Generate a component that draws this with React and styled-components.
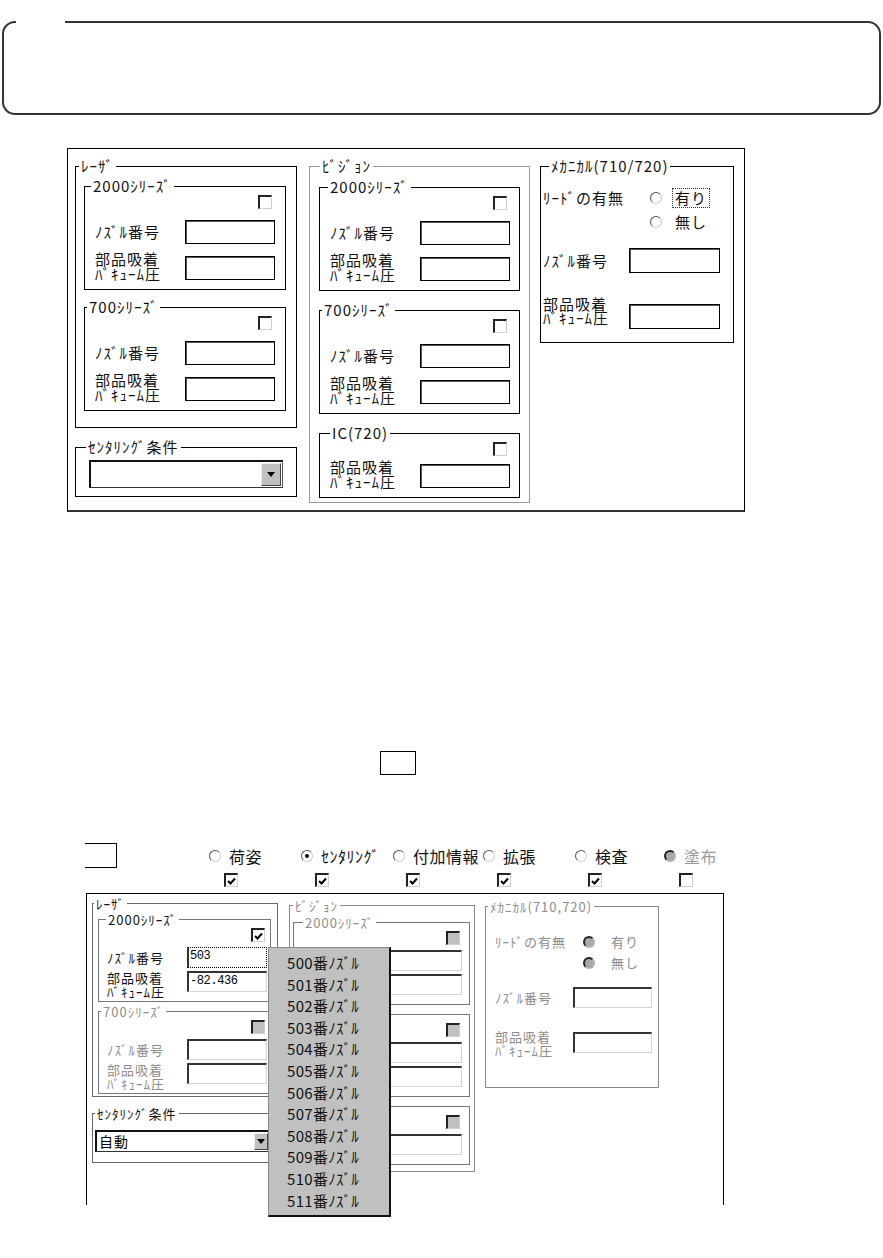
import React from "react";
import styled, { createGlobalStyle, css } from "styled-components";

const GlobalStyle = createGlobalStyle`
  html, body { margin: 0; padding: 0; background: #fff; }
  body { font-family: "Noto Sans CJK JP", "Noto Sans", sans-serif; color: #111; }
`;

// upper dialog sizes / lower dialog sizes
const UP = {
  lh: 14, lh2: 15, labelW: 90, editW: 90, editH: 24, subPad: "2px 0 8px 10px",
  checkPad: 3, row1Mt: 11, row2Mt: 7, shift: 5, icMt: 3, subLine: "#000", sunken: false,
};
const LO = {
  lh: 13, lh2: 14, labelW: 80, editW: 80, editH: 21, subPad: "2px 0 2px 8px",
  checkPad: 2, row1Mt: 5, row2Mt: 3, shift: 0, icMt: 5, subLine: "#777", sunken: true,
};
const MU = {
  w: 194, ml: 10, mt: 0, line: "#000", indent: 11, lh: 14, lh2: 14, pad: "14px 0 13px 2px",
  leadW: 107, optH: 22, optGap: 2, radioGap: 10, row1Mt: 15, row2Mt: 24, shift: 7,
  labelW: 86, editW: 91, editH: 25, sunken: false,
};
const ML = {
  w: 174, ml: 10, mt: 3, line: "#888", indent: 5, lh: 13, lh2: 14, pad: "19px 0 29px 9px",
  leadW: 88, optH: 20, optGap: 1, radioGap: 13, row1Mt: 14, row2Mt: 22, shift: 2,
  labelW: 78, editW: 79, editH: 21, sunken: true,
};

const Page = styled.div`
  width: 883px;
  height: 1258px;
  overflow: hidden;
`;

const Banner = styled.fieldset`
  box-sizing: border-box;
  height: 94px;
  margin: 21px 2px 0;
  padding: 0 0 0 12px;
  min-width: 0;
  border: 2px solid #333;
  border-radius: 13px;
`;
const BannerGap = styled.legend`
  width: 49px;
  height: 2px;
  padding: 0;
  margin: 0;
`;

const Dialog = styled.div`
  box-sizing: border-box;
  width: 678px;
  height: 364px;
  margin: 33px 0 0 67px;
  padding: 10px 0 0 7px;
  border: 1px solid #000;
  border-bottom: 2px solid #333;
  display: flex;
  align-items: flex-start;
  font-size: 15px;
  letter-spacing: 1px;
`;

const Column = styled.div`
  display: flex;
  flex-direction: column;
  width: ${p => p.$w}px;
  margin-left: ${p => p.$ml || 0}px;
  margin-top: ${p => p.$mt || 0}px;
`;

const Group = styled.fieldset`
  box-sizing: border-box;
  margin: ${p => p.$mt || 0}px 0 0 ${p => p.$ml || 0}px;
  padding: 0;
  min-width: 0;
  width: ${p => (p.$w ? `${p.$w}px` : "auto")};
  border: 1px solid ${p => p.$line || "#000"};
  color: ${p => (p.$dim ? "#8c8c8c" : "inherit")};
`;
const Title = styled.legend`
  margin-left: ${p => p.$indent - 3}px;
  padding: 0 2px;
  height: ${p => p.$lh}px;
  line-height: ${p => p.$lh}px;
  white-space: nowrap;
`;
const Body = styled.div`
  display: flex;
  flex-direction: column;
  padding: ${p => p.$pad};
`;

const CheckLine = styled.div`
  display: flex;
  justify-content: flex-end;
  width: ${p => p.$w}px;
  padding-right: ${p => p.$pr}px;
  box-sizing: border-box;
`;
const Box = styled.span`
  box-sizing: border-box;
  display: inline-flex;
  align-items: center;
  justify-content: center;
  width: 14px;
  height: 14px;
  border-style: solid;
  border-width: 2px 1px 1px 2px;
  border-color: #222 #cfcfcf #cfcfcf #222;
  background: ${p => (p.$dim ? "#c0c0c0" : "#fff")};
`;
function Check({ checked, dim }) {
  return (
    <Box $dim={dim}>
      {checked && (
        <svg width="9" height="8" viewBox="0 0 9 8">
          <path d="M1 4 L3.5 6.5 L8 1.5" fill="none" stroke="#000" strokeWidth="2" />
        </svg>
      )}
    </Box>
  );
}

const Radio = styled.span`
  box-sizing: border-box;
  flex: 0 0 12px;
  width: 12px;
  height: 12px;
  border-radius: 50%;
  border-style: solid;
  border-width: ${p => (p.$dim ? 2 : 1)}px;
  border-color: ${p => (p.$dim ? "#222 #b0b0b0 #b0b0b0 #222" : "#555 #cfcfcf #cfcfcf #555")};
  background: ${p => (p.$dim ? "#a9a9a9" : "#fff")};
  display: flex;
  align-items: center;
  justify-content: center;
  &::after {
    content: "";
    display: ${p => (p.$on ? "block" : "none")};
    width: 4px;
    height: 4px;
    border-radius: 50%;
    background: #000;
  }
`;

const Row = styled.div`
  display: flex;
  align-items: ${p => (p.$top ? "flex-start" : "center")};
  margin-top: ${p => p.$mt || 0}px;
`;
const Label = styled.div`
  flex: 0 0 ${p => p.$w}px;
  min-height: ${p => p.$lh * (p.$lines || 1)}px;
  line-height: ${p => p.$lh}px;
  white-space: nowrap;
`;
const Edit = styled.div`
  box-sizing: border-box;
  flex: 0 0 ${p => p.$w}px;
  height: ${p => p.$h}px;
  margin-top: ${p => p.$mt || 0}px;
  padding-left: 1px;
  background: #fff;
  color: #000;
  font: 12px/17px "Liberation Mono", monospace;
  letter-spacing: -0.4px;
  ${p =>
    p.$sunken
      ? css`
          border-style: solid;
          border-width: 2px 1px 1px 2px;
          border-color: #333 #d4d4d4 #d4d4d4 #333;
        `
      : css`
          border: 1px solid #000;
          box-shadow: inset 1px 1px 0 #555;
        `}
  ${p =>
    p.$focus &&
    css`
      border: 1px dotted #000;
      border-left: 2px solid #333;
    `}
`;

const Combo = styled.div`
  box-sizing: border-box;
  display: flex;
  height: ${p => p.$h}px;
  background: #fff;
  border-style: solid;
  border-width: 2px 1px 1px 2px;
  border-color: #111 #555 #333 #111;
  font-size: 14px;
  line-height: ${p => p.$h - 3}px;
  color: #000;
`;
const ComboText = styled.span`
  flex: 1;
  padding-left: 2px;
`;
const ComboBtn = styled.span`
  box-sizing: border-box;
  flex: 0 0 ${p => p.$w}px;
  margin: 1px;
  background: #c0c0c0;
  border: 1px solid;
  border-color: #eee #444 #444 #eee;
  display: flex;
  align-items: center;
  justify-content: center;
  &::after {
    content: "";
    border-left: 4px solid transparent;
    border-right: 4px solid transparent;
    border-top: 5px solid #000;
  }
`;

const OptCol = styled.div`
  display: flex;
  flex-direction: column;
  gap: ${p => p.$gap}px;
`;
const Opt = styled.div`
  display: flex;
  align-items: center;
  height: ${p => p.$h}px;
  gap: ${p => p.$gap}px;
  white-space: nowrap;
`;
const OptText = styled.span`
  padding: 0 2px;
  line-height: 18px;
  border: 1px ${p => (p.$focus ? "dotted #333" : "solid transparent")};
`;

const MiddleBox = styled.div`
  box-sizing: border-box;
  width: 36px;
  height: 24px;
  margin: 239px 0 0 380px;
  border: 1px solid #000;
`;

const LowerWrap = styled.div`
  margin-top: 68px;
  padding-left: 85px;
`;
const Head = styled.div`
  display: flex;
  align-items: flex-start;
`;
const Bracket = styled.div`
  box-sizing: border-box;
  width: 32px;
  height: 25px;
  border: 1px solid #000;
  border-left: none;
`;
const Options = styled.div`
  margin-left: 92px;
`;
const TabRow = styled.div`
  display: grid;
  grid-template-columns: 92px 92px 90px 92px 89px auto;
  align-items: center;
  height: 25px;
  font-size: 16px;
  letter-spacing: 0.5px;
`;
const Tab = styled.div`
  display: flex;
  align-items: center;
  gap: 8px;
  white-space: nowrap;
  color: ${p => (p.$dim ? "#9a9a9a" : "#111")};
`;
const TabChecks = styled.div`
  display: grid;
  grid-template-columns: repeat(6, 91px);
  margin-top: 5px;
  padding-left: 15px;
`;

const Frame = styled.div`
  position: relative;
  box-sizing: border-box;
  width: 638px;
  height: 312px;
  margin: 6px 0 0 1px;
  padding: 3px 0 0 5px;
  border: 1px solid #000;
  border-bottom: none;
  display: flex;
  align-items: flex-start;
  font-size: 13px;
  letter-spacing: 1px;
`;

const DropList = styled.ul`
  position: absolute;
  left: 181px;
  top: 53px;
  box-sizing: border-box;
  width: 123px;
  height: 270px;
  margin: 0;
  padding: 4px 0 0 18px;
  list-style: none;
  background: #c0c0c0;
  border: 1px solid #8a8a8a;
  border-right: 2px solid #111;
  border-bottom: 2px solid #111;
  font-size: 15px;
  letter-spacing: 0.3px;
  color: #111;
`;
const DropItem = styled.li`
  line-height: 21.6px;
  white-space: nowrap;
`;

// covered: the labels sit under the open drop-down list, so they are not drawn
function Series({ k, title, indent, mt, ic, checked, dim, values = [], focus, covered }) {
  return (
    <Group $mt={mt} $line={k.subLine} $dim={dim}>
      <Title $indent={indent} $lh={k.lh}>{title}</Title>
      <Body $pad={k.subPad}>
        <CheckLine $w={k.labelW + k.editW} $pr={k.checkPad}>
          <Check checked={checked} dim={dim} />
        </CheckLine>
        {!ic && (
          <Row $mt={k.row1Mt}>
            <Label $w={k.labelW} $lh={k.lh}>{!covered && "ﾉｽﾞﾙ番号"}</Label>
            <Edit $w={k.editW} $h={k.editH} $sunken={k.sunken} $focus={focus}>{values[0]}</Edit>
          </Row>
        )}
        <Row $top $mt={ic ? k.icMt : k.row2Mt}>
          <Label $w={k.labelW} $lh={k.lh2} $lines={2}>
            {!covered && (
              <>
                部品吸着<br />ﾊﾞｷｭｰﾑ圧
              </>
            )}
          </Label>
          <Edit $w={k.editW} $h={k.editH} $mt={k.shift} $sunken={k.sunken}>{values[1]}</Edit>
        </Row>
      </Body>
    </Group>
  );
}

function Mech({ k, title, dim }) {
  return (
    <Group $w={k.w} $ml={k.ml} $mt={k.mt} $line={k.line} $dim={dim}>
      <Title $indent={k.indent} $lh={k.lh}>{title}</Title>
      <Body $pad={k.pad}>
        <Row $top>
          <Label $w={k.leadW} $lh={k.optH}>ﾘｰﾄﾞの有無</Label>
          <OptCol $gap={k.optGap}>
            <Opt $h={k.optH} $gap={k.radioGap}>
              <Radio $dim={dim} />
              <OptText $focus={!dim}>有り</OptText>
            </Opt>
            <Opt $h={k.optH} $gap={k.radioGap}>
              <Radio $dim={dim} />
              <OptText>無し</OptText>
            </Opt>
          </OptCol>
        </Row>
        <Row $mt={k.row1Mt}>
          <Label $w={k.labelW} $lh={k.lh}>ﾉｽﾞﾙ番号</Label>
          <Edit $w={k.editW} $h={k.editH} $sunken={k.sunken} />
        </Row>
        <Row $top $mt={k.row2Mt}>
          <Label $w={k.labelW} $lh={k.lh2} $lines={2}>部品吸着<br />ﾊﾞｷｭｰﾑ圧</Label>
          <Edit $w={k.editW} $h={k.editH} $mt={k.shift} $sunken={k.sunken} />
        </Row>
      </Body>
    </Group>
  );
}

const tabs = [
  { label: "荷姿" },
  { label: "ｾﾝﾀﾘﾝｸﾞ", on: true },
  { label: "付加情報" },
  { label: "拡張" },
  { label: "検査" },
  { label: "塗布", dim: true },
];

const nozzles = Array.from({ length: 12 }, (_, i) => `${500 + i}番ﾉｽﾞﾙ`);

export default function App() {
  return (
    <Page>
      <GlobalStyle />
      <Banner>
        <BannerGap />
      </Banner>

      <Dialog>
        <Column $w={222}>
          <Group $line="#000">
            <Title $indent={6} $lh={14}>ﾚｰｻﾞ</Title>
            <Body $pad="6px 10px 16px 8px">
              <Series k={UP} title="2000ｼﾘｰｽﾞ" indent={9} />
              <Series k={UP} title="700ｼﾘｰｽﾞ" indent={5} mt={10} />
            </Body>
          </Group>
          <Group $mt={12} $line="#000">
            <Title $indent={13} $lh={14}>ｾﾝﾀﾘﾝｸﾞ条件</Title>
            <Body $pad="6px 13px 8px 13px">
              <Combo $h={28}>
                <ComboText />
                <ComboBtn $w={20} />
              </Combo>
            </Body>
          </Group>
        </Column>

        <Column $w={221} $ml={12}>
          <Group $line="#999">
            <Title $indent={13} $lh={14}>ﾋﾞｼﾞｮﾝ</Title>
            <Body $pad="7px 9px 4px 9px">
              <Series k={UP} title="2000ｼﾘｰｽﾞ" indent={11} />
              <Series k={UP} title="700ｼﾘｰｽﾞ" indent={5} mt={12} />
              <Series k={UP} title="IC(720)" indent={13} mt={12} ic />
            </Body>
          </Group>
        </Column>

        <Mech k={MU} title="ﾒｶﾆｶﾙ(710/720)" />
      </Dialog>

      <MiddleBox />

      <LowerWrap>
        <Head>
          <Bracket />
          <Options>
            <TabRow>
              {tabs.map(t => (
                <Tab key={t.label} $dim={t.dim}>
                  <Radio $on={t.on} $dim={t.dim} />
                  {t.label}
                </Tab>
              ))}
            </TabRow>
            <TabChecks>
              {tabs.map(t => (
                <Check key={t.label} checked={!t.dim} />
              ))}
            </TabChecks>
          </Options>
        </Head>

        <Frame>
          <Column $w={186}>
            <Group $line="#666">
              <Title $indent={4} $lh={13}>ﾚｰｻﾞ</Title>
              <Body $pad="3px 6px 2px 5px">
                <Series k={LO} title="2000ｼﾘｰｽﾞ" indent={10} checked focus values={["503", "-82.436"]} />
                <Series k={LO} title="700ｼﾘｰｽﾞ" indent={5} mt={3} dim />
              </Body>
            </Group>
            <Group $mt={10} $line="#666">
              <Title $indent={5} $lh={13}>ｾﾝﾀﾘﾝｸﾞ条件</Title>
              <Body $pad="10px 7px 10px 2px">
                <Combo $h={22}>
                  <ComboText>自動</ComboText>
                  <ComboBtn $w={14} />
                </Combo>
              </Body>
            </Group>
          </Column>

          <Column $w={186} $ml={11} $mt={2}>
            <Group $line="#888" $dim>
              <Title $indent={6} $lh={13}>ﾋﾞｼﾞｮﾝ</Title>
              <Body $pad="4px 4px 6px 3px">
                <Series k={LO} title="2000ｼﾘｰｽﾞ" indent={12} dim covered />
                <Series k={LO} title="" indent={5} mt={3} dim covered />
                <Series k={LO} title="" indent={5} mt={3} ic dim covered />
              </Body>
            </Group>
          </Column>

          <Mech k={ML} title="ﾒｶﾆｶﾙ(710,720)" dim />

          <DropList>
            {nozzles.map(n => (
              <DropItem key={n}>{n}</DropItem>
            ))}
          </DropList>
        </Frame>
      </LowerWrap>
    </Page>
  );
}
